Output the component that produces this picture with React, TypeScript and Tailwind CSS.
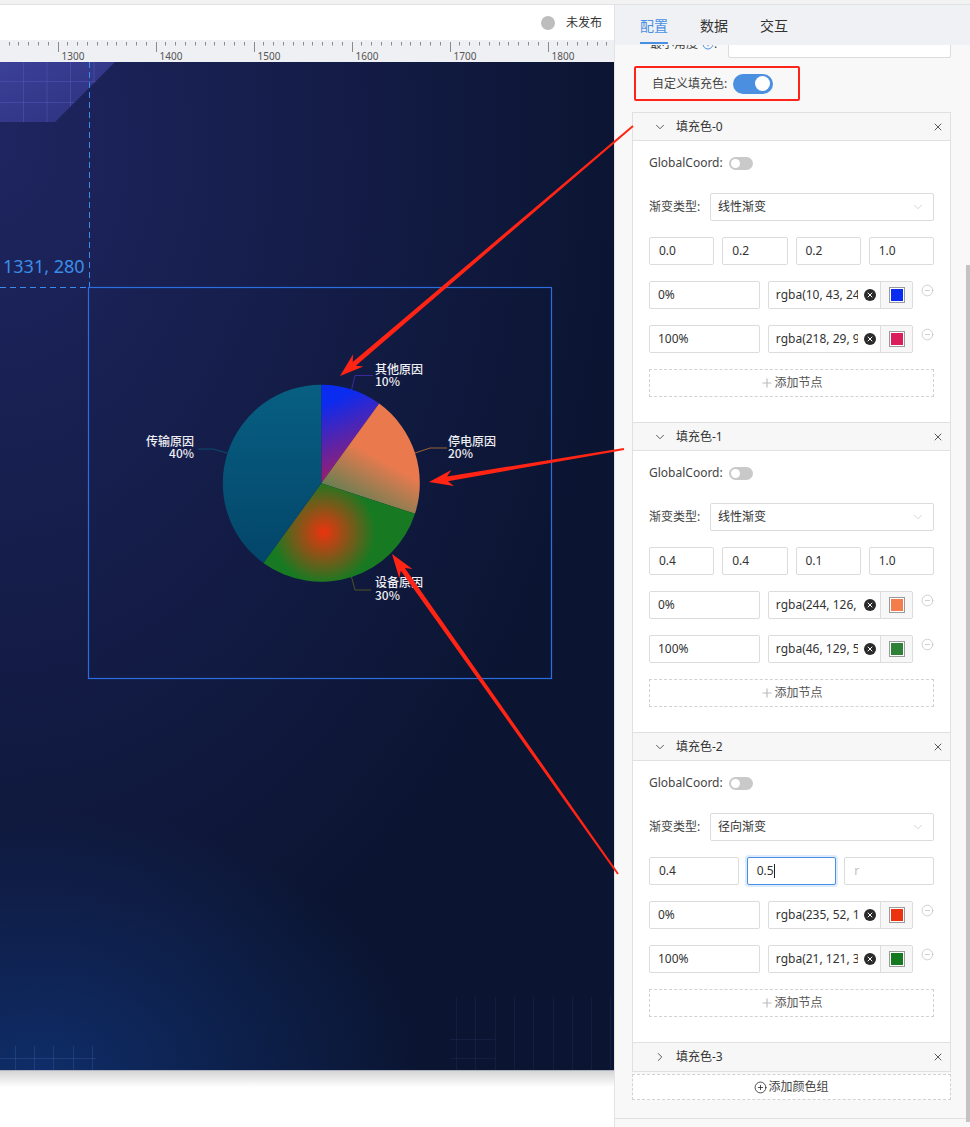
import { ChevronDown, ChevronRight, X, CirclePlus, CircleMinus, Plus, Info } from "lucide-react";

type Stop = { pos: string; text: string; color: string };
type Coord = { value: string; placeholder?: boolean; focused?: boolean };
type Group = { title: string; type: string; coords: Coord[]; stops: Stop[] };

const groups: Group[] = [
  {
    title: "填充色-0",
    type: "线性渐变",
    coords: [{ value: "0.0" }, { value: "0.2" }, { value: "0.2" }, { value: "1.0" }],
    stops: [
      { pos: "0%", text: "rgba(10, 43, 240, 1)", color: "#0a2bf0" },
      { pos: "100%", text: "rgba(218, 29, 91, 1)", color: "#da1d5b" },
    ],
  },
  {
    title: "填充色-1",
    type: "线性渐变",
    coords: [{ value: "0.4" }, { value: "0.4" }, { value: "0.1" }, { value: "1.0" }],
    stops: [
      { pos: "0%", text: "rgba(244, 126, 75, 1)", color: "#f47e4b" },
      { pos: "100%", text: "rgba(46, 129, 54, 1)", color: "#2e8136" },
    ],
  },
  {
    title: "填充色-2",
    type: "径向渐变",
    coords: [{ value: "0.4" }, { value: "0.5", focused: true }, { value: "r", placeholder: true }],
    stops: [
      { pos: "0%", text: "rgba(235, 52, 15, 1)", color: "#eb340f" },
      { pos: "100%", text: "rgba(21, 121, 33, 1)", color: "#157921" },
    ],
  },
];

// pie geometry, in page coordinates
const CX = 321.3;
const CY = 483.3;
const R = 98.5;

function polar(deg: number, r = R) {
  const a = (deg * Math.PI) / 180;
  return [CX + r * Math.sin(a), CY - r * Math.cos(a)];
}

function sector(a0: number, a1: number) {
  const [x0, y0] = polar(a0);
  const [x1, y1] = polar(a1);
  const large = a1 - a0 > 180 ? 1 : 0;
  return `M${CX} ${CY} L${x0} ${y0} A${R} ${R} 0 ${large} 1 ${x1} ${y1} Z`;
}

function arrowPoints(tx: number, ty: number, px: number, py: number) {
  const dx = px - tx;
  const dy = py - ty;
  const len = Math.hypot(dx, dy);
  const ux = dx / len;
  const uy = dy / len;
  const nx = -uy;
  const ny = ux;
  const L = 24;
  const W = 8;
  const w0 = 1;
  const w1 = 2.4;
  const bx = px - ux * L;
  const by = py - uy * L;
  const kx = px - ux * L * 0.78;
  const ky = py - uy * L * 0.78;
  const pts = [
    [tx + nx * w0, ty + ny * w0],
    [kx + nx * w1, ky + ny * w1],
    [bx + nx * W, by + ny * W],
    [px, py],
    [bx - nx * W, by - ny * W],
    [kx - nx * w1, ky - ny * w1],
    [tx - nx * w0, ty - ny * w0],
  ];
  return pts.map((p) => `${p[0].toFixed(1)},${p[1].toFixed(1)}`).join(" ");
}

const swatchBg: Record<string, string> = {
  "#0a2bf0": "bg-[#0a2bf0]",
  "#da1d5b": "bg-[#da1d5b]",
  "#f47e4b": "bg-[#f47e4b]",
  "#2e8136": "bg-[#2e8136]",
  "#eb340f": "bg-[#eb340f]",
  "#157921": "bg-[#157921]",
};

function TopBar() {
  return (
    <div className="h-[35px] bg-white flex items-center justify-end pr-[12px] gap-[11px]">
      <span className="w-[14px] h-[14px] rounded-full bg-[#bdbdbd]" />
      <span className="text-[12px] text-[#333]">未发布</span>
    </div>
  );
}

function Ruler() {
  const ticks = [];
  for (let k = -5; k <= 56; k++) {
    const x = Math.round(57.6 + k * 9.8) + 0.5;
    if (x > 614) break;
    const major = k % 10 === 0;
    ticks.push(
      <g key={k}>
        <line x1={x} y1={2} x2={x} y2={major ? 12 : 5.5} stroke="#8a8a8a" strokeWidth={1} />
        {major && (
          <text x={x + 3} y={19.5} fontSize={10} fill="#555" fontFamily="'Noto Sans', 'Liberation Sans', sans-serif">
            {1300 + (k / 10) * 100}
          </text>
        )}
      </g>
    );
  }
  return (
    <div className="h-[22px] bg-[#eff0f4]">
      <svg width="614" height="22">{ticks}</svg>
    </div>
  );
}

function Canvas() {
  return (
    <div className="relative h-[1008px] overflow-hidden bg-[#0b1532] bg-[image:radial-gradient(ellipse_620px_900px_at_0%_8%,#1e2560_0%,rgba(30,37,96,0)_100%),radial-gradient(ellipse_380px_260px_at_6%_100%,#0f2d68_0%,rgba(15,45,104,0)_100%)]">
      <svg className="absolute left-0 top-0" width="614" height="1008">
        <defs>
          <linearGradient id="tl" x1="0" y1="0" x2="1" y2="1">
            <stop offset="0" stopColor="#3c4199" />
            <stop offset="1" stopColor="#2b307c" />
          </linearGradient>
          <clipPath id="tlc">
            <polygon points="0,0 115,0 55,60 0,60" />
          </clipPath>
          <linearGradient id="g0" x1="0" y1="0.2" x2="0.2" y2="1">
            <stop offset="0" stopColor="#0a2bf0" />
            <stop offset="1" stopColor="#a41d66" />
          </linearGradient>
          <linearGradient id="g1" x1="0.4" y1="0.4" x2="0.1" y2="1">
            <stop offset="0" stopColor="#ea7a4e" />
            <stop offset="1" stopColor="#2e8155" />
          </linearGradient>
          <radialGradient id="g2" gradientUnits="userSpaceOnUse" cx="323.7" cy="532.2" r="52">
            <stop offset="0" stopColor="#eb340f" />
            <stop offset="1" stopColor="#177a22" />
          </radialGradient>
          <linearGradient id="g3" x1="0" y1="0" x2="0" y2="1">
            <stop offset="0" stopColor="#075f82" />
            <stop offset="1" stopColor="#03466a" />
          </linearGradient>
        </defs>

        {/* corner decoration */}
        <g clipPath="url(#tlc)">
          <rect x="0" y="0" width="116" height="61" fill="url(#tl)" />
          {[23.5, 47, 70.5, 94].map((x) => (
            <line key={x} x1={x} y1={0} x2={x} y2={60} stroke="#5058b4" strokeOpacity={0.55} />
          ))}
          {[19.5, 40.5].map((y) => (
            <line key={y} x1={0} y1={y} x2={116} y2={y} stroke="#5058b4" strokeOpacity={0.55} />
          ))}
        </g>

        {/* faint bottom grids */}
        {[15.5, 34.5, 53.5, 73.5, 92.5].map((x) => (
          <line key={x} x1={x} y1={984} x2={x} y2={1008} stroke="#3c5fa8" strokeOpacity={0.35} />
        ))}
        <line x1={0} y1={996.5} x2={96} y2={996.5} stroke="#3c5fa8" strokeOpacity={0.35} />
        {[456.5, 475.5, 495.5, 514.5, 533.5, 553.5, 572.5, 591.5, 610.5].map((x) => (
          <line key={x} x1={x} y1={935} x2={x} y2={1008} stroke="#3a5590" strokeOpacity={0.16} />
        ))}
        <line x1={450} y1={977.5} x2={495} y2={977.5} stroke="#3a5590" strokeOpacity={0.16} />
        <line x1={450} y1={996.5} x2={495} y2={996.5} stroke="#3a5590" strokeOpacity={0.16} />

        {/* guides */}
        <line x1={89.5} y1={0} x2={89.5} y2={225} stroke="#3b8cf0" strokeDasharray="6 4" />
        <line x1={0} y1={225.5} x2={89} y2={225.5} stroke="#3b8cf0" strokeDasharray="6 4" />
        <rect x={88.5} y={225.5} width={463} height={391} fill="none" stroke="#2c6ee0" strokeWidth={1.2} />

        <g transform="translate(0 -62)">
          <path d={sector(0, 36)} fill="url(#g0)" />
          <path d={sector(36, 108)} fill="url(#g1)" />
          <path d={sector(108, 216)} fill="url(#g2)" />
          <path d={sector(216, 360)} fill="url(#g3)" />

          <polyline points="351.5,390 355,375.5 373,375.5" fill="none" stroke="#3b2a9c" />
          <polyline points="415,453 430,448 447,448" fill="none" stroke="#9a6038" />
          <polyline points="351.5,577 355,590 371,590" fill="none" stroke="#4f5420" />
          <polyline points="227,453 213,449 198,449" fill="none" stroke="#0b4d6c" />

          <g fill="#eeeef2" fontSize={12} fontWeight={500} fontFamily="'Noto Sans CJK SC', sans-serif">
            <text x={375} y={373.5}>其他原因</text>
            <text x={375} y={386}>10%</text>
            <text x={448} y={446}>停电原因</text>
            <text x={448} y={458}>20%</text>
            <text x={375} y={587}>设备原因</text>
            <text x={375} y={600}>30%</text>
            <text x={194} y={446} textAnchor="end">传输原因</text>
            <text x={194} y={458} textAnchor="end">40%</text>
          </g>
        </g>
      </svg>
      <span className="absolute left-[3px] top-[192px] text-[18px] leading-[24px] text-[#3a8ee8] font-['Noto_Sans',sans-serif]">
        1331, 280
      </span>
    </div>
  );
}

function Toggle() {
  return (
    <span className="w-[24px] h-[13px] rounded-full bg-[#c9c9c9] flex items-center pl-[2px]">
      <span className="w-[9px] h-[9px] rounded-full bg-white" />
    </span>
  );
}

function CoordInput({ c }: { c: Coord }) {
  return (
    <div
      className={
        c.focused
          ? "flex-1 h-[28px] rounded-[2px] bg-white border border-[#4a90e2] shadow-[0_0_0_2px_rgba(74,144,226,0.18)] flex items-center pl-[9px] text-[12px] text-[#333]"
          : "flex-1 h-[28px] rounded-[2px] bg-white border border-[#dcdcdc] flex items-center pl-[9px] text-[12px] text-[#333]"
      }
    >
      <span className={c.placeholder ? "text-[#c0c0c0]" : ""}>{c.value}</span>
      {c.focused && <span className="w-[1px] h-[14px] bg-[#222]" />}
    </div>
  );
}

function StopRow({ s }: { s: Stop }) {
  return (
    <div className="h-[28px] flex gap-[8px]">
      <div className="w-[112px] h-[28px] rounded-[2px] bg-white border border-[#dcdcdc] flex items-center pl-[8px] text-[12px] text-[#333]">
        {s.pos}
      </div>
      <div className="w-[147px] h-[28px] rounded-[2px] bg-white border border-[#dcdcdc] flex items-center">
        <div className="w-[89px] pl-[7px] overflow-hidden whitespace-nowrap text-[12px] text-[#333]">{s.text}</div>
        <span className="ml-[6px] w-[12px] h-[12px] rounded-full bg-[#2b2b2b] flex items-center justify-center">
          <X size={8} color="#fff" strokeWidth={3} />
        </span>
        <div className="ml-auto w-[32px] h-full border-l border-[#dcdcdc] bg-[#f7f7f7] flex items-center justify-center">
          <span className="w-[16px] h-[16px] border border-[#9a9a9a] bg-white p-[1px]">
            <span className={`block w-full h-full ${swatchBg[s.color]}`} />
          </span>
        </div>
      </div>
      <CircleMinus size={13} color="#c4c4c4" strokeWidth={1.5} className="mt-[3px]" />
    </div>
  );
}

function GroupPanel({ g, first }: { g: Group; first: boolean }) {
  return (
    <div className={first ? "" : "border-t border-[#e0e0e0]"}>
      <div className="h-[28px] bg-[#f7f7f7] border-b border-[#e0e0e0] flex items-center pl-[20px] pr-[6px] gap-[9px] text-[12px] text-[#333]">
        <ChevronDown size={14} strokeWidth={1.5} color="#444" />
        <span>{g.title}</span>
        <X size={12} strokeWidth={1.6} color="#333" className="ml-auto" />
      </div>
      <div className="bg-white px-[16px] pt-[8px] pb-[25px] flex flex-col gap-[16px]">
        <div className="h-[28px] flex items-center">
          <span className="w-[80px] text-[12px] text-[#444]">GlobalCoord:</span>
          <Toggle />
        </div>
        <div className="h-[28px] flex items-center">
          <span className="w-[61px] text-[12px] text-[#444]">渐变类型:</span>
          <div className="flex-1 h-[28px] rounded-[2px] bg-white border border-[#dcdcdc] flex items-center pl-[7px] pr-[8px] text-[12px] text-[#333]">
            {g.type}
            <ChevronDown size={14} strokeWidth={1} color="#b8b8b8" className="ml-auto" />
          </div>
        </div>
        <div className="h-[28px] flex gap-[8px]">
          {g.coords.map((c, i) => (
            <CoordInput key={i} c={c} />
          ))}
        </div>
        {g.stops.map((s) => (
          <StopRow key={s.pos} s={s} />
        ))}
        <div className="h-[28px] border border-dashed border-[#d2d2d2] flex items-center justify-center text-[12px] text-[#555]">
          <Plus size={14} strokeWidth={2} color="#bcbcbc" />
          添加节点
        </div>
      </div>
    </div>
  );
}

function SidePanel() {
  return (
    <div className="flex-1 flex flex-col border-l border-[#e3e3e3] bg-[#f8f8f8]">
      <div className="h-[40px] shrink-0 bg-[#f0f1f4] flex pl-[25px] gap-[32px] text-[14px]">
        <div className="relative flex items-center text-[#4a90e2]">
          配置
          <span className="absolute left-0 right-0 bottom-[1px] h-[2px] bg-[#4a90e2]" />
        </div>
        <div className="flex items-center text-[#333]">数据</div>
        <div className="flex items-center text-[#333]">交互</div>
      </div>
      <div className="flex-1 flex min-h-0">
        <div className="flex-1 overflow-hidden">
          <div className="-mt-[15px] h-[28px] flex items-center pl-[35px]">
            <div className="w-[78px] flex items-center text-[12px] text-[#444]">
              最小角度
              <Info size={12} color="#4a90e2" className="ml-[4px]" />
              :
            </div>
            <div className="w-[223px] h-[28px] rounded-[2px] bg-white border border-[#dcdcdc]" />
          </div>

          <div className="mt-[8px] ml-[19px] w-[166px] h-[35px] border-2 border-[#ff2419] rounded-[2px] flex items-center pl-[16px]">
            <span className="text-[12px] text-[#444]">自定义填充色:</span>
            <span className="ml-[6px] w-[40px] h-[20px] rounded-full bg-[#4a8fe0] flex items-center justify-end pr-[3px]">
              <span className="w-[15px] h-[15px] rounded-full bg-white" />
            </span>
          </div>

          <div className="mt-[11px] ml-[17px] w-[319px] border border-[#e0e0e0] bg-white">
            {groups.map((g, i) => (
              <GroupPanel key={g.title} g={g} first={i === 0} />
            ))}
            <div className="border-t border-[#e0e0e0] h-[29px] bg-[#f7f7f7] flex items-center pl-[20px] pr-[6px] gap-[9px] text-[12px] text-[#333]">
              <ChevronRight size={14} strokeWidth={1.5} color="#444" />
              <span>填充色-3</span>
              <X size={12} strokeWidth={1.6} color="#333" className="ml-auto" />
            </div>
          </div>

          <div className="mt-[2px] ml-[17px] w-[319px] h-[26px] border border-dashed border-[#d2d2d2] bg-white flex items-center justify-center gap-[1px] text-[12px] text-[#444]">
            <CirclePlus size={13} strokeWidth={1.6} color="#333" />
            添加颜色组
          </div>

          <div className="mt-[18px] border-t border-[#e0e0e0]" />
        </div>
        <div className="w-[4px] pt-[220px] pb-[5px]">
          <div className="h-full bg-[#c3c3c3]" />
        </div>
      </div>
    </div>
  );
}

function Arrows() {
  const arrows = [
    { t: [633, 126], p: [340, 376] },
    { t: [624, 449], p: [429, 482] },
    { t: [618, 874], p: [392, 554] },
  ];
  return (
    <svg className="absolute left-0 top-0 pointer-events-none" width="970" height="1127">
      {arrows.map((a, i) => (
        <polygon key={i} points={arrowPoints(a.t[0], a.t[1], a.p[0], a.p[1])} fill="#ff2414" />
      ))}
    </svg>
  );
}

export default function App() {
  return (
    <div className="relative w-[970px] h-[1127px] overflow-hidden bg-white font-['Noto_Sans','Noto_Sans_CJK_SC',sans-serif] text-[#333]">
      <div className="h-[5px] bg-[#f2f2f2] border-b border-[#e2e2e2]" />
      <div className="flex h-[1122px]">
        <div className="w-[614px] flex flex-col">
          <TopBar />
          <Ruler />
          <Canvas />
          <div className="flex-1 border-t border-[#aeb3bf] bg-[linear-gradient(to_bottom,#d5d5d5,#ffffff_16px)]" />
        </div>
        <SidePanel />
      </div>
      <Arrows />
    </div>
  );
}
